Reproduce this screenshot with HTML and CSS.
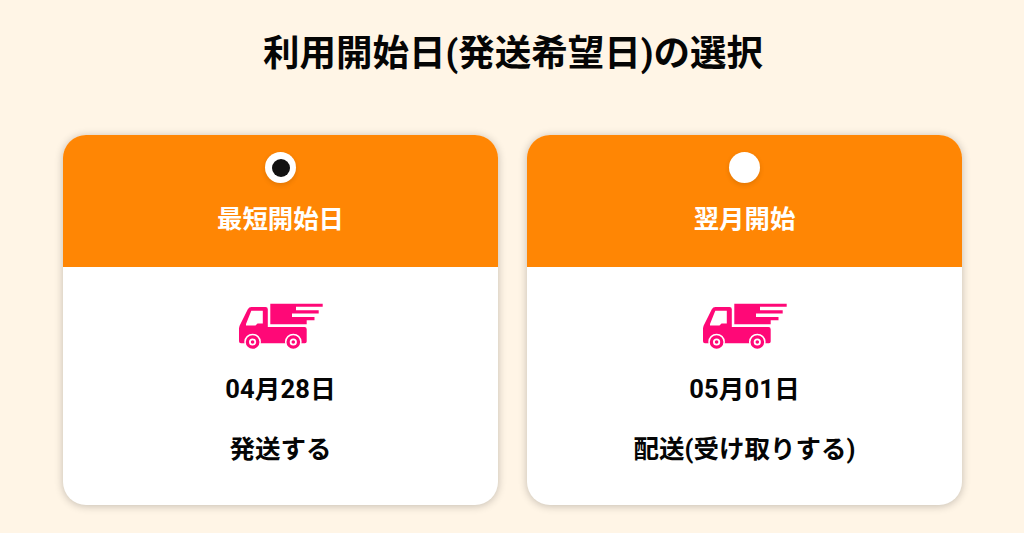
FILE: index.html
```html
<!DOCTYPE html>
<html lang="ja">
<head>
<meta charset="utf-8">
<title>利用開始日の選択</title>
<link rel="stylesheet" href="styles.css">
</head>
<body>
<svg class="sprite" aria-hidden="true">
<symbol id="truck" viewBox="0 0 86 48">
<path fill="#ff0877" d="M32.3 1.7H84.7V4.7H58V8.3H80.7V11.6H54V15H76.5V18.3H68.7V22.3H32.3Z"/>
<path fill="#ff0877" fill-rule="evenodd" d="M13.5 5H27.5Q29.8 5 29.8 7.3V25H66.5Q68.7 25 68.7 27.2V39.5Q68.7 41.3 66.9 41.3H3Q1 41.3 1 39.3V27Q1 25.5 1.6 23.8L9.8 7.3Q11 5 13.5 5ZM13.3 8.8L8 22V23.5H17.5L19.5 21.5H24.8V8.8Z"/>
<g fill="#ff0877" stroke="#fff">
<circle cx="14.6" cy="40" r="7.6" stroke-width="1.5"/><circle cx="55.3" cy="40" r="7.6" stroke-width="1.5"/>
<circle cx="14.6" cy="40" r="2.7" stroke-width="1.8"/><circle cx="55.3" cy="40" r="2.7" stroke-width="1.8"/>
</g>
</symbol>
</svg>
<main class="page">
<h1 class="title">利用開始日(発送希望日)の選択</h1>
<div class="cards">
<label class="card">
<span class="head"><span class="radio checked"></span><span class="name">最短開始日</span></span>
<span class="body"><svg class="truck"><use href="#truck"/></svg><span class="date">04月28日</span><span class="note">発送する</span></span>
</label>
<label class="card">
<span class="head"><span class="radio"></span><span class="name">翌月開始</span></span>
<span class="body"><svg class="truck"><use href="#truck"/></svg><span class="date">05月01日</span><span class="note">配送(受け取りする)</span></span>
</label>
</div>
</main>
</body>
</html>
```
FILE: styles.css
```css
* { box-sizing: border-box; }
body { margin: 0; background: #fff5e6; color: #050505; font-family: Roboto, "Noto Sans CJK JP", sans-serif; font-weight: 700; }
.sprite { position: absolute; width: 0; height: 0; }
.page { height: 533px; padding-top: 29px; overflow: hidden; }
.title { margin: 0; padding-left: 2px; height: 50px; line-height: 50px; font-size: 36.5px; text-align: center; white-space: nowrap; }
.cards { display: flex; gap: 29px; margin: 56px 62px 0 63px; }
.card { flex: 1; height: 370px; border-radius: 23px; background: #fff; overflow: hidden; box-shadow: 0 1px 9px rgba(0,0,0,.24); }
.head { display: flex; flex-direction: column; align-items: center; height: 132px; padding-top: 17px; background: #ff8604; color: #fff; }
.radio { display: flex; align-items: center; justify-content: center; width: 31px; height: 31px; border-radius: 50%; background: #fff; box-shadow: 0 2px 5px rgba(0,0,0,.12); }
.checked::before { content: ""; width: 18px; height: 18px; border-radius: 50%; background: #111; }
.name { margin-top: 18px; font-size: 25.4px; line-height: 36px; }
.body { display: flex; flex-direction: column; align-items: center; font-size: 25.5px; line-height: 36px; }
.truck { width: 86px; height: 48px; margin-top: 35px; }
.date { margin-top: 21px; letter-spacing: .2px; }
.note { margin-top: 24px; }
```
